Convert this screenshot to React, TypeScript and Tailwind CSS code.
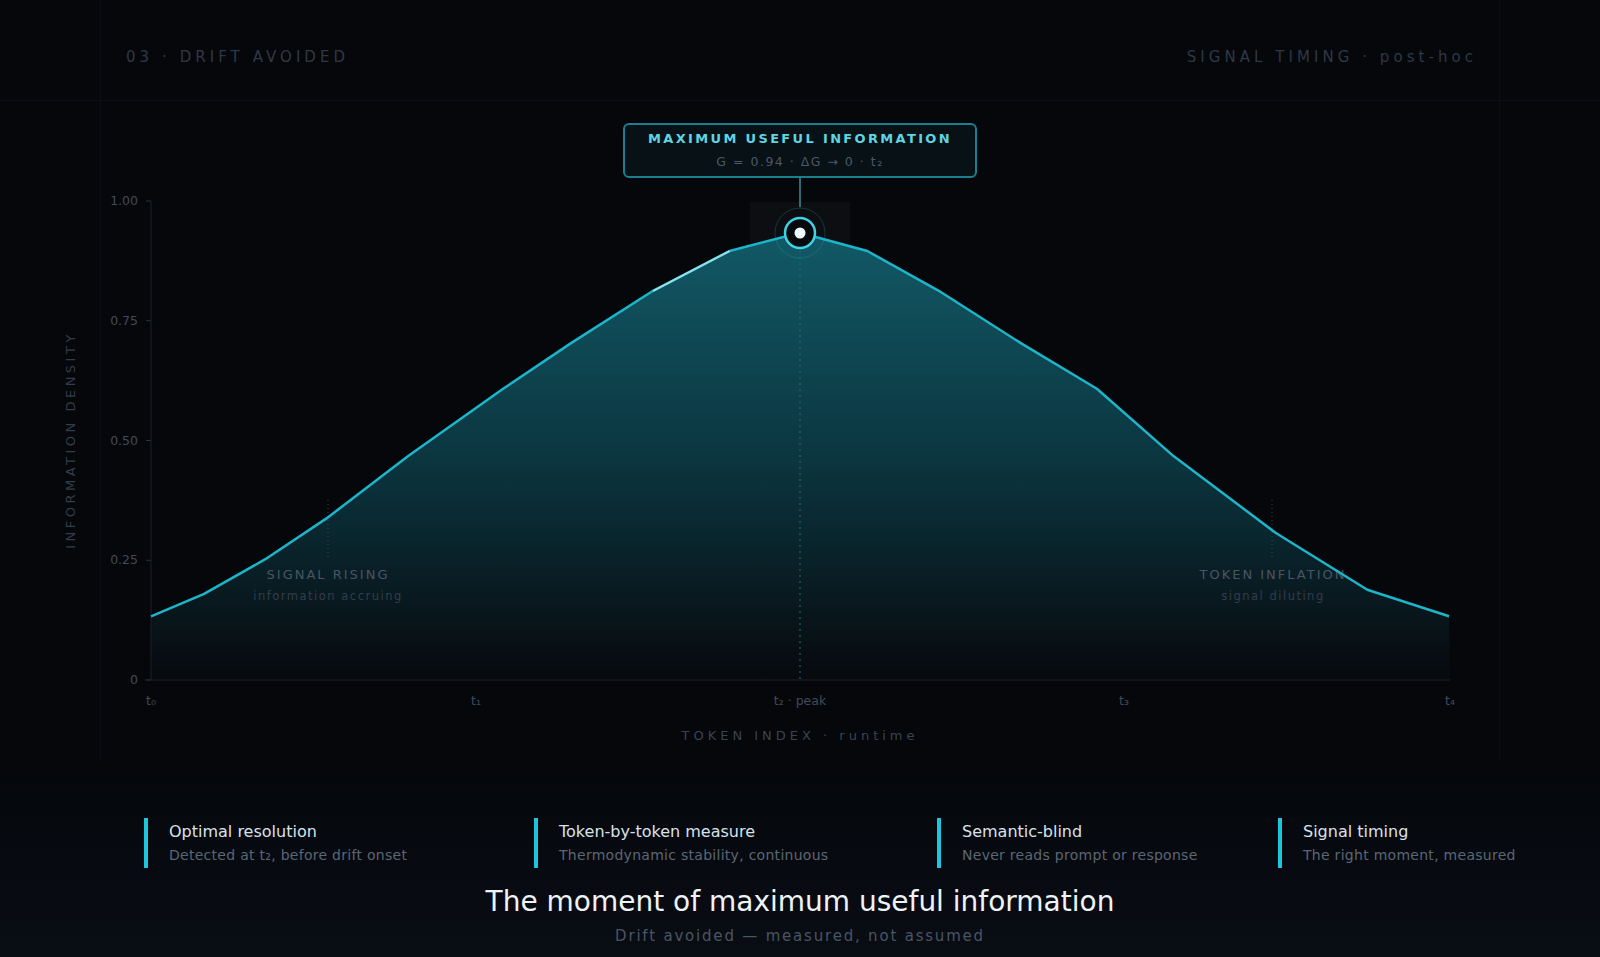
import React from 'react'

const X0 = 151
const X1 = 1450
const Y0 = 680
const H = 479
const K = 1600 / 1568

// curve nodes read off the reference
const raw: [number, number][] = [
  [148, 604], [200, 582], [260, 548], [320, 508], [400, 447], [493, 381], [560, 336], [640, 285],
  [715, 246], [784, 228], [850, 246], [920, 285], [1000, 336], [1075, 381], [1150, 447], [1250, 522],
  [1340, 578], [1420, 604],
]
const pts = raw.map(([x, y]) => [x * K, y * K] as [number, number])
const toPath = (p: [number, number][]) => p.map((q, i) => `${i ? 'L' : 'M'}${q[0].toFixed(1)},${q[1].toFixed(1)}`).join(' ')
const line = toPath(pts)
const area = `${line} L${X1},${Y0} L${X0},${Y0} Z`
const hiLine = toPath(pts.filter(p => p[0] > 650 && p[0] < 735))

const font = { fontFamily: '"DejaVu Sans", sans-serif' }

const cards = [
  { title: 'Optimal resolution', sub: 'Detected at t₂, before drift onset', w: 'w-[390px]' },
  { title: 'Token-by-token measure', sub: 'Thermodynamic stability, continuous', w: 'w-[403px]' },
  { title: 'Semantic-blind', sub: 'Never reads prompt or response', w: 'w-[341px]' },
  { title: 'Signal timing', sub: 'The right moment, measured', w: 'w-auto' },
]

function Chart() {
  const ticks = [
    { v: '1.00', y: Y0 - H },
    { v: '0.75', y: Y0 - 0.75 * H },
    { v: '0.50', y: Y0 - 0.5 * H },
    { v: '0.25', y: Y0 - 0.25 * H },
    { v: '0', y: Y0 },
  ]
  const xt = [
    { t: 't₀', x: X0 },
    { t: 't₁', x: 476 },
    { t: 't₂ · peak', x: 800 },
    { t: 't₃', x: 1124 },
    { t: 't₄', x: X1 },
  ]
  return (
    <svg width="1600" height="650" viewBox="0 110 1600 650" className="block" style={font}>
      <defs>
        <linearGradient id="fillU" x1="0" y1="233" x2="0" y2="680" gradientUnits="userSpaceOnUse">
          <stop offset="0" stopColor="#125966" />
          <stop offset="0.5" stopColor="#0b3640" />
          <stop offset="1" stopColor="#07090d" />
        </linearGradient>
      </defs>
      <rect x="750" y="202" width="100" height="478" fill="#ffffff" opacity="0.03" />
      <path d={area} fill="url(#fillU)" />
      <line x1={X0} y1={Y0 - H} x2={X0} y2={Y0} stroke="#1a212b" />
      <line x1={X0 - 6} y1={Y0} x2={X1} y2={Y0} stroke="#1a212b" />
      {ticks.map(t => (
        <g key={t.v}>
          <line x1={X0 - 5} y1={t.y} x2={X0} y2={t.y} stroke="#2a323d" />
          <text x={X0 - 13} y={t.y + 4} textAnchor="end" fontSize="12.5" fill="#414a59">{t.v}</text>
        </g>
      ))}
      {xt.map(t => (
        <text key={t.t} x={t.x} y={705} textAnchor="middle" fontSize="12.5" fill="#414a59">{t.t}</text>
      ))}
      <text x={800} y={740} textAnchor="middle" fontSize="13" letterSpacing="4" fill="#3a4352">TOKEN INDEX · runtime</text>
      <text transform="translate(75,440) rotate(-90)" textAnchor="middle" fontSize="13" letterSpacing="3.5" fill="#343d4b">INFORMATION DENSITY</text>
      <line x1="328" y1="500" x2="328" y2="560" stroke="#3a4352" strokeDasharray="1 3" />
      <line x1="1272" y1="500" x2="1272" y2="560" stroke="#3a4352" strokeDasharray="1 3" />
      <line x1="800" y1="245" x2="800" y2={Y0} stroke="#2a6c78" strokeDasharray="2 4" />
      <text x="328" y="579" textAnchor="middle" fontSize="13" letterSpacing="2" fill="#4a5564">SIGNAL RISING</text>
      <text x="328" y="600" textAnchor="middle" fontSize="11.5" letterSpacing="1.5" fill="#343d4b">information accruing</text>
      <text x="1273" y="579" textAnchor="middle" fontSize="13" letterSpacing="2" fill="#4a5564">TOKEN INFLATION</text>
      <text x="1273" y="600" textAnchor="middle" fontSize="11.5" letterSpacing="1.5" fill="#343d4b">signal diluting</text>
      <path d={line} fill="none" stroke="#1cb5c9" strokeWidth="2.5" strokeLinejoin="round" />
      <path d={hiLine} fill="none" stroke="#cfeff4" strokeWidth="2" opacity="0.7" />
      <line x1="800" y1="178" x2="800" y2="207" stroke="#3a8c99" strokeWidth="1.5" />
      <circle cx="800" cy="233" r="25" fill="none" stroke="#1cb5c9" strokeOpacity="0.25" />
      <circle cx="800" cy="233" r="15" fill="#07090d" stroke="#3fd3e6" strokeWidth="2.5" />
      <circle cx="800" cy="233" r="5.5" fill="#effcff" />
    </svg>
  )
}

export default function App() {
  return (
    <div className="relative w-full h-[957px] overflow-hidden bg-[#05070b]" style={font}>
      <div className="absolute left-[100px] top-0 bottom-0 w-px bg-[#0b0f15]" />
      <div className="absolute right-[100px] top-0 bottom-0 w-px bg-[#0b0f15]" />
      <div className="absolute left-0 right-0 top-[100px] h-px bg-[#0b0f15]" />
      <div className="absolute left-0 right-0 top-[760px] bottom-0 bg-gradient-to-b from-[#05070b] to-[#090d14]" />
      <div className="relative flex justify-between items-center h-[114px] pl-[126px] pr-[123px] text-[15px] tracking-[0.27em] text-[#2f3846]">
        <span>03 · DRIFT AVOIDED</span>
        <span>SIGNAL TIMING · post-hoc</span>
      </div>
      <div className="relative -mt-[4px]">
        <Chart />
        <div className="absolute left-[623px] top-[13px] w-[354px] h-[55px] rounded-md border-2 border-[#1a7f8e] bg-[#071116] flex flex-col items-center justify-center gap-[4px]">
          <span className="text-[13px] font-semibold tracking-[0.18em] text-[#5fd4e3]">MAXIMUM USEFUL INFORMATION</span>
          <span className="text-[12.5px] tracking-[0.12em] text-[#4c5865]">G = 0.94 · ΔG → 0 · t₂</span>
        </div>
      </div>
      <div className="relative flex pl-[144px] mt-[58px]">
        {cards.map(c => (
          <div key={c.title} className={`${c.w} shrink-0`}>
            <div className="border-l-4 border-[#1ec6dd] pl-[21px] h-[50px] flex flex-col justify-center gap-[8px]">
              <span className="text-[16px] font-medium text-[#d9e2ea] leading-none">{c.title}</span>
              <span className="text-[14px] text-[#5b6675] leading-none tracking-[0.02em]">{c.sub}</span>
            </div>
          </div>
        ))}
      </div>
      <div className="relative flex flex-col items-center mt-[16px]">
        <span className="text-[28px] text-[#eef3f7] leading-tight">The moment of maximum useful information</span>
        <span className="text-[15px] tracking-[0.12em] text-[#4a5563] mt-[6px]">Drift avoided — measured, not assumed</span>
      </div>
    </div>
  )
}
